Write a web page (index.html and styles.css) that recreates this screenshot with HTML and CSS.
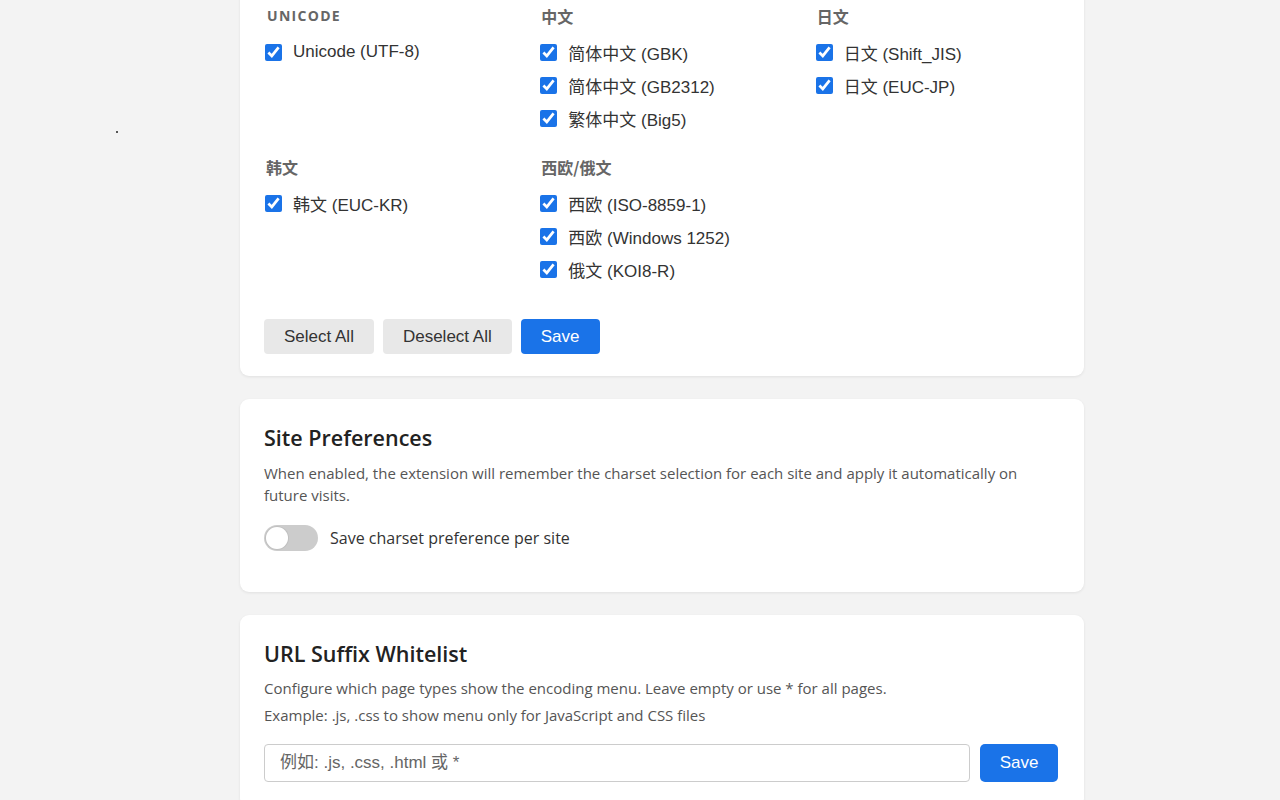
FILE: index.html
```html
<!DOCTYPE html>
<html lang="zh-CN">
<head>
<meta charset="utf-8">
<title>Charset Options</title>
<link rel="stylesheet" href="styles.css">
</head>
<body>
<div class="page">
  <aside class="side"><span class="dot"></span></aside>
  <main class="main">
    <section class="card card-charsets">
      <div class="charset-grid">
        <div class="group">
          <h3 class="group-title upper">Unicode</h3>
          <label class="item"><input type="checkbox" checked><span>Unicode (UTF-8)</span></label>
        </div>
        <div class="group">
          <h3 class="group-title">中文</h3>
          <label class="item"><input type="checkbox" checked><span>简体中文 (GBK)</span></label>
          <label class="item"><input type="checkbox" checked><span>简体中文 (GB2312)</span></label>
          <label class="item"><input type="checkbox" checked><span>繁体中文 (Big5)</span></label>
        </div>
        <div class="group">
          <h3 class="group-title">日文</h3>
          <label class="item"><input type="checkbox" checked><span>日文 (Shift_JIS)</span></label>
          <label class="item"><input type="checkbox" checked><span>日文 (EUC-JP)</span></label>
        </div>
        <div class="group">
          <h3 class="group-title">韩文</h3>
          <label class="item"><input type="checkbox" checked><span>韩文 (EUC-KR)</span></label>
        </div>
        <div class="group">
          <h3 class="group-title">西欧/俄文</h3>
          <label class="item"><input type="checkbox" checked><span>西欧 (ISO-8859-1)</span></label>
          <label class="item"><input type="checkbox" checked><span>西欧 (Windows 1252)</span></label>
          <label class="item"><input type="checkbox" checked><span>俄文 (KOI8-R)</span></label>
        </div>
      </div>
      <div class="actions">
        <button class="btn btn-grey">Select All</button>
        <button class="btn btn-grey">Deselect All</button>
        <button class="btn btn-blue">Save</button>
      </div>
    </section>

    <section class="card">
      <h2 class="card-title">Site Preferences</h2>
      <p class="desc">When enabled, the extension will remember the charset selection for each site and apply it automatically on future visits.</p>
      <label class="toggle-row">
        <span class="switch"><span class="knob"></span></span>
        <span class="toggle-label">Save charset preference per site</span>
      </label>
    </section>

    <section class="card">
      <h2 class="card-title">URL Suffix Whitelist</h2>
      <p class="hint">Configure which page types show the encoding menu. Leave empty or use * for all pages.</p>
      <p class="hint">Example: .js, .css to show menu only for JavaScript and CSS files</p>
      <div class="input-row">
        <input class="text-input" type="text" placeholder="例如: .js, .css, .html 或 *">
        <button class="btn btn-blue btn-tall">Save</button>
      </div>
    </section>
  </main>
</div>
</body>
</html>
```

FILE: styles.css
```css
* { box-sizing: border-box; }

html, body {
  margin: 0;
  padding: 0;
  background: #f3f3f3;
  font-family: "Open Sans", "Noto Sans CJK SC", sans-serif;
  color: #222;
}

.page {
  display: flex;
  align-items: flex-start;
  height: 800px;
  overflow: hidden;
}

.side {
  width: 240px;
  flex: none;
  padding: 131px 0 0 116px;
}

.dot {
  display: block;
  width: 2px;
  height: 2px;
  background: #555;
}

.main {
  width: 844px;
  flex: none;
  margin-top: -22px;
  display: flex;
  flex-direction: column;
  gap: 23px;
}

.card {
  background: #fff;
  border-radius: 9px;
  box-shadow: 0 1px 3px rgba(0, 0, 0, 0.08);
  padding: 24px 24px 25px;
}

.card-charsets {
  padding: 0 24px 22px 24px;
}

/* charset checkbox groups */
.charset-grid {
  padding-top: 28px;
  display: grid;
  grid-template-columns: repeat(3, 1fr);
  column-gap: 30px;
  row-gap: 27px;
}

.group {
  display: flex;
  flex-direction: column;
  gap: 9px;
}

.group-title {
  margin: 0 0 5px 2px;
  font-size: 16px;
  line-height: 20px;
  font-weight: 700;
  color: #666;
  font-family: "Noto Sans CJK SC", sans-serif;
}

.group-title.upper {
  margin-left: 3px;
  text-transform: uppercase;
  letter-spacing: 1.3px;
  font-family: "Open Sans", sans-serif;
  font-size: 14px;
}

.item {
  display: flex;
  align-items: center;
  height: 24px;
  font-size: 17px;
  color: #333;
  font-family: "Liberation Sans", "Noto Sans CJK SC", sans-serif;
}

.item input {
  width: 17px;
  height: 17px;
  margin: 0 11px 0 1px;
  accent-color: #1a73e8;
}

.actions {
  display: flex;
  gap: 9px;
  margin-top: 38px;
}

.btn {
  height: 35px;
  border: none;
  border-radius: 4px;
  font-family: "Liberation Sans", Arial, sans-serif;
  font-size: 17px;
  padding: 0 20px;
}

.btn-grey {
  background: #e8e8e8;
  color: #333;
}

.btn-blue {
  background: #1a73e8;
  color: #fff;
}

/* card headings and copy */
.card-title {
  margin: 1px 0 10px;
  font-size: 21.5px;
  line-height: 28px;
  font-weight: 600;
  color: #222;
}

.desc {
  margin: 0;
  font-size: 15px;
  line-height: 22px;
  color: #555;
}

.toggle-row {
  display: flex;
  align-items: center;
  gap: 12px;
  margin: 19px 0 16px;
}

.switch {
  width: 54px;
  height: 26px;
  border-radius: 13px;
  background: #ccc;
  display: flex;
  align-items: center;
  padding: 0 2px;
}

.knob {
  width: 22px;
  height: 22px;
  border-radius: 50%;
  background: #fff;
  box-shadow: 0 0 0 1px rgba(0, 0, 0, 0.06);
}

.toggle-label {
  font-size: 16px;
  color: #333;
}

/* whitelist */
.hint {
  margin: 0 0 7px;
  font-size: 15px;
  line-height: 20px;
  color: #555;
}

.input-row {
  display: flex;
  gap: 10px;
  margin-top: 19px;
  padding-right: 2px;
}

.text-input {
  flex: 1;
  height: 38px;
  border: 1px solid #ccc;
  border-radius: 4px;
  padding: 0 15px;
  font-family: "Liberation Sans", Arial, "Noto Sans CJK SC", sans-serif;
  font-size: 17px;
}

.text-input::placeholder {
  color: #666;
}

.btn-tall {
  height: 38px;
  width: 78px;
  padding: 0;
  border-radius: 5px;
}
```
